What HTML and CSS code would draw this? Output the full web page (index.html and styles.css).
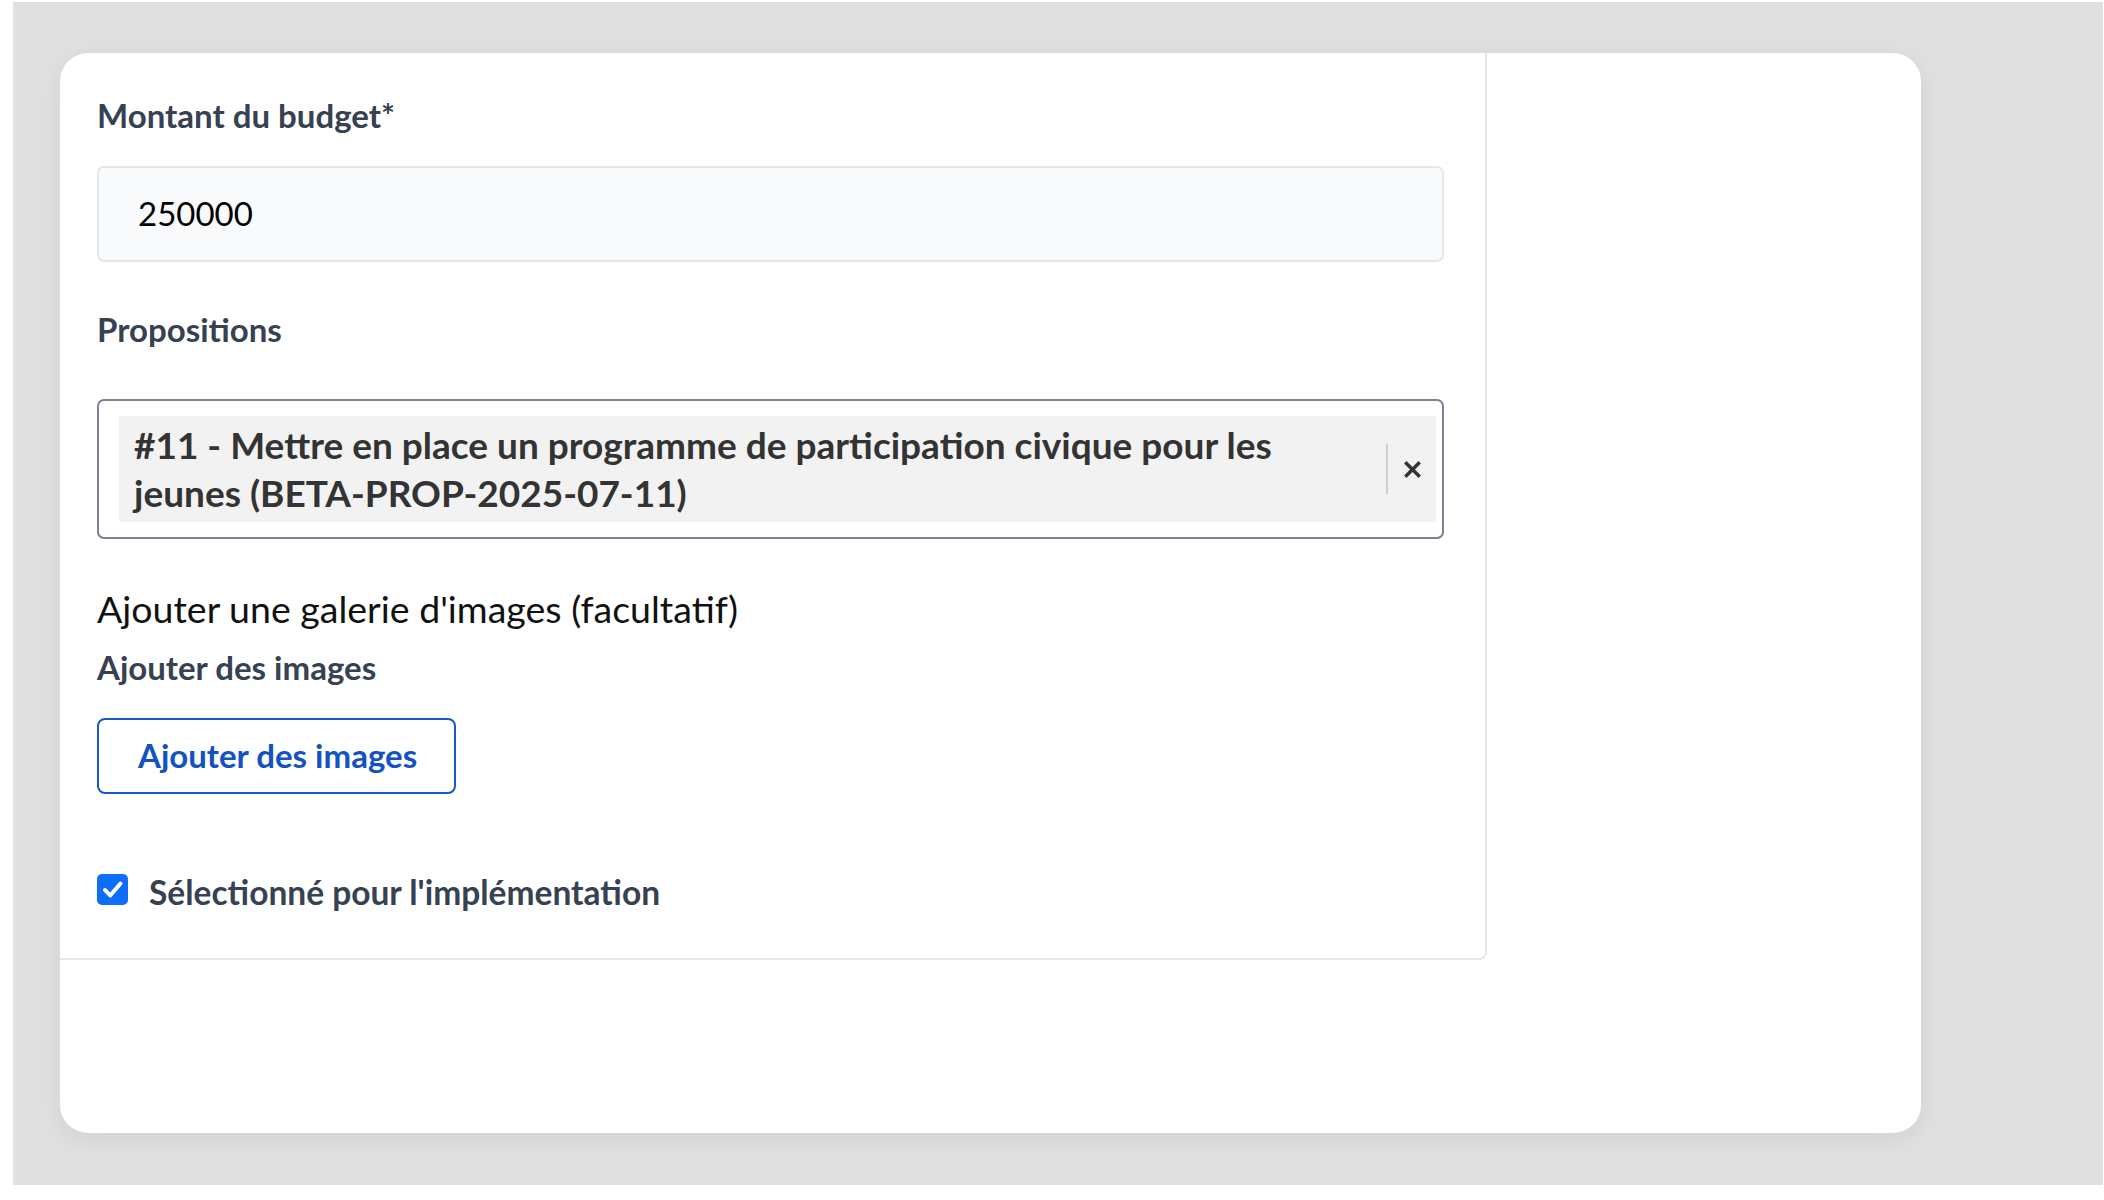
FILE: index.html
```html
<!DOCTYPE html>
<html lang="fr">
<head>
<meta charset="utf-8">
<title>Budget</title>
<link rel="stylesheet" href="styles.css">
</head>
<body>
<div class="backdrop">
  <div class="card">
    <form class="panel">
      <label class="label lbl-budget" for="budget">Montant du budget*</label>
      <div class="input" id="budget">250000</div>

      <div class="label lbl-props">Propositions</div>
      <div class="select">
        <div class="chip">
          <span class="chip-text">#11 - Mettre en place un programme de participation civique pour les jeunes (BETA-PROP-2025-07-11)</span>
          <span class="chip-remove">
            <svg width="17" height="17" viewBox="0 0 17 17"><path d="M2.5 2.5 L14.5 14.5 M14.5 2.5 L2.5 14.5" stroke="#333" stroke-width="3.4" stroke-linecap="square"/></svg>
          </span>
        </div>
      </div>

      <div class="gallery-title">Ajouter une galerie d'images (facultatif)</div>
      <div class="label lbl-images">Ajouter des images</div>
      <button type="button" class="btn-outline">Ajouter des images</button>

      <div class="check-row">
        <span class="checkbox">
          <svg width="31" height="31" viewBox="0 0 31 31"><path d="M8 16 L13.2 21.5 L23.5 9.5" fill="none" stroke="#fff" stroke-width="4" stroke-linecap="round" stroke-linejoin="round"/></svg>
        </span>
        <span class="check-label">Sélectionné pour l'implémentation</span>
      </div>
    </form>
  </div>
</div>
</body>
</html>
```

FILE: styles.css
```css
html, body {
  margin: 0;
  padding: 0;
  background: #ffffff;
}

body {
  font-family: Lato, "Liberation Sans", sans-serif;
}

.backdrop {
  margin: 2px 0 0 13px;
  width: 2090px;
  height: 1183px;
  background: #e0e0e0;
  padding: 51px 0 0 47px;
  box-sizing: border-box;
}

.card {
  width: 1861px;
  height: 1080px;
  background: #ffffff;
  border-radius: 28px;
  box-shadow: 0 6px 26px rgba(0, 0, 0, 0.07);
  overflow: hidden;
}

.panel {
  width: 1427px;
  height: 907px;
  box-sizing: border-box;
  border-right: 2px solid #e7e7e7;
  border-bottom: 2px solid #e7e7e7;
  border-bottom-right-radius: 8px;
  padding: 43px 41px 0 37px;
  display: flex;
  flex-direction: column;
  align-items: flex-start;
  margin: 0;
}

.label {
  display: block;
  font-size: 33px;
  line-height: 1.2;
  font-weight: 700;
  color: #364152;
}

.input {
  margin-top: 30px;
  width: 1347px;
  height: 96px;
  box-sizing: border-box;
  border: 2px solid #e4e6ea;
  border-radius: 7px;
  background: #f9fafb;
  padding: 0 39px;
  display: flex;
  align-items: center;
  font-size: 33px;
  line-height: 1.2;
  color: #000;
}

.lbl-props {
  margin-top: 48px;
}

.select {
  margin-top: 50px;
  width: 1347px;
  height: 140px;
  box-sizing: border-box;
  border: 2px solid #7d8291;
  border-radius: 7px;
  padding: 15px 6px 15px 20px;
}

.chip {
  display: flex;
  align-items: center;
  height: 106px;
  background: #f2f2f2;
  box-sizing: border-box;
}

.chip-text {
  flex: 1;
  padding: 5px 30px 5px 15px;
  font-size: 37px;
  line-height: 48px;
  font-weight: 700;
  color: #333;
}

.chip-remove {
  width: 48px;
  height: 50px;
  border-left: 2px solid #cfcfcf;
  display: flex;
  align-items: center;
  justify-content: center;
}

.gallery-title {
  margin-top: 47px;
  font-size: 37.5px;
  line-height: 1.2;
  font-weight: 400;
  color: #111;
}

.lbl-images {
  margin-top: 17px;
}

.btn-outline {
  margin-top: 30px;
  width: 359px;
  height: 76px;
  box-sizing: border-box;
  border: 2px solid #1558c8;
  border-radius: 8px;
  background: #fff;
  padding: 0 0 0 39px;
  text-align: left;
  font-family: Lato, "Liberation Sans", sans-serif;
  font-size: 33px;
  line-height: 1.2;
  font-weight: 700;
  color: #1252c2;
}

.check-row {
  margin-top: 78px;
  display: flex;
  align-items: center;
  gap: 21px;
}

.checkbox {
  width: 31px;
  height: 31px;
  border-radius: 5px;
  background: #0d6efd;
  display: flex;
  margin-bottom: 5px;
}

.check-label {
  font-size: 33.5px;
  line-height: 1.2;
  font-weight: 700;
  color: #364152;
}
```
